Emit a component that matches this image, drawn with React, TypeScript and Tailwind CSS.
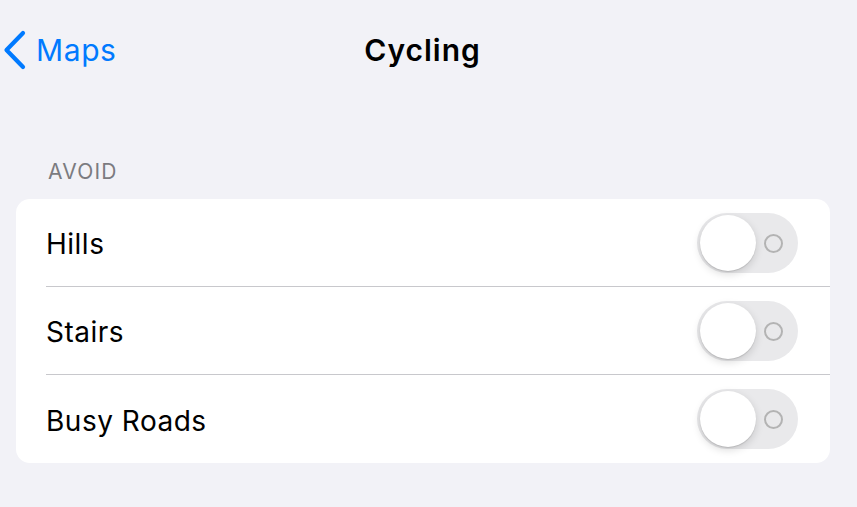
import React from "react";

const rows = ["Hills", "Stairs", "Busy Roads"];

function Toggle() {
  return (
    <div className="relative h-[60px] w-[101px] rounded-full bg-[#e9e9eb]">
      <div className="absolute left-[3px] top-[2px] h-[56px] w-[56px] rounded-full bg-white shadow-[0_3px_8px_rgba(0,0,0,0.15),0_1px_1px_rgba(0,0,0,0.12)]" />
      <div className="absolute left-[67px] top-[21px] h-[19px] w-[19px] rounded-full border-2 border-[#b3b3b3]" />
    </div>
  );
}

export default function App() {
  return (
    <div
      className="h-[507px] w-[857px] overflow-hidden bg-[#f2f2f7]"
      style={{ fontFamily: "Inter, 'Noto Sans', sans-serif" }}
    >
      {/* Nav bar */}
      <div className="relative flex h-[100px] items-start pt-[30px]">
        <div className="flex items-center gap-[10px] pl-[2px] text-[#007aff]">
          <svg width="24" height="40" viewBox="0 0 24 40" fill="none">
            <path d="M21 3 L4.5 20 L21 37" stroke="#007aff" strokeWidth="4.2" strokeLinecap="round" strokeLinejoin="round" />
          </svg>
          <span className="text-[30px] leading-[40px] tracking-[0.6px]">Maps</span>
        </div>
        <div className="absolute left-0 right-[12px] top-[30px] text-center text-[30px] font-semibold leading-[40px] tracking-[1px] text-black">
          Cycling
        </div>
      </div>

      {/* Section */}
      <div className="px-[16px] pr-[27px]">
        <div className="pl-[32px] pt-[59px] pb-[15px] text-[21px] leading-[25px] tracking-[1.2px] text-[#7b7b80]">
          AVOID
        </div>
        <div className="overflow-hidden rounded-[14px] bg-white">
          {rows.map((r, i) => (
            <div key={r} className="flex h-[88px] items-center pl-[30px]">
              <div
                className={`flex h-full flex-1 items-center justify-between pr-[32px] ${
                  i < rows.length - 1 ? "border-b border-[#c8c8cc]" : ""
                }`}
              >
                <span className="pt-[3px] text-[28px] tracking-[0.5px] text-black">{r}</span>
                <Toggle />
              </div>
            </div>
          ))}
        </div>
      </div>
    </div>
  );
}
